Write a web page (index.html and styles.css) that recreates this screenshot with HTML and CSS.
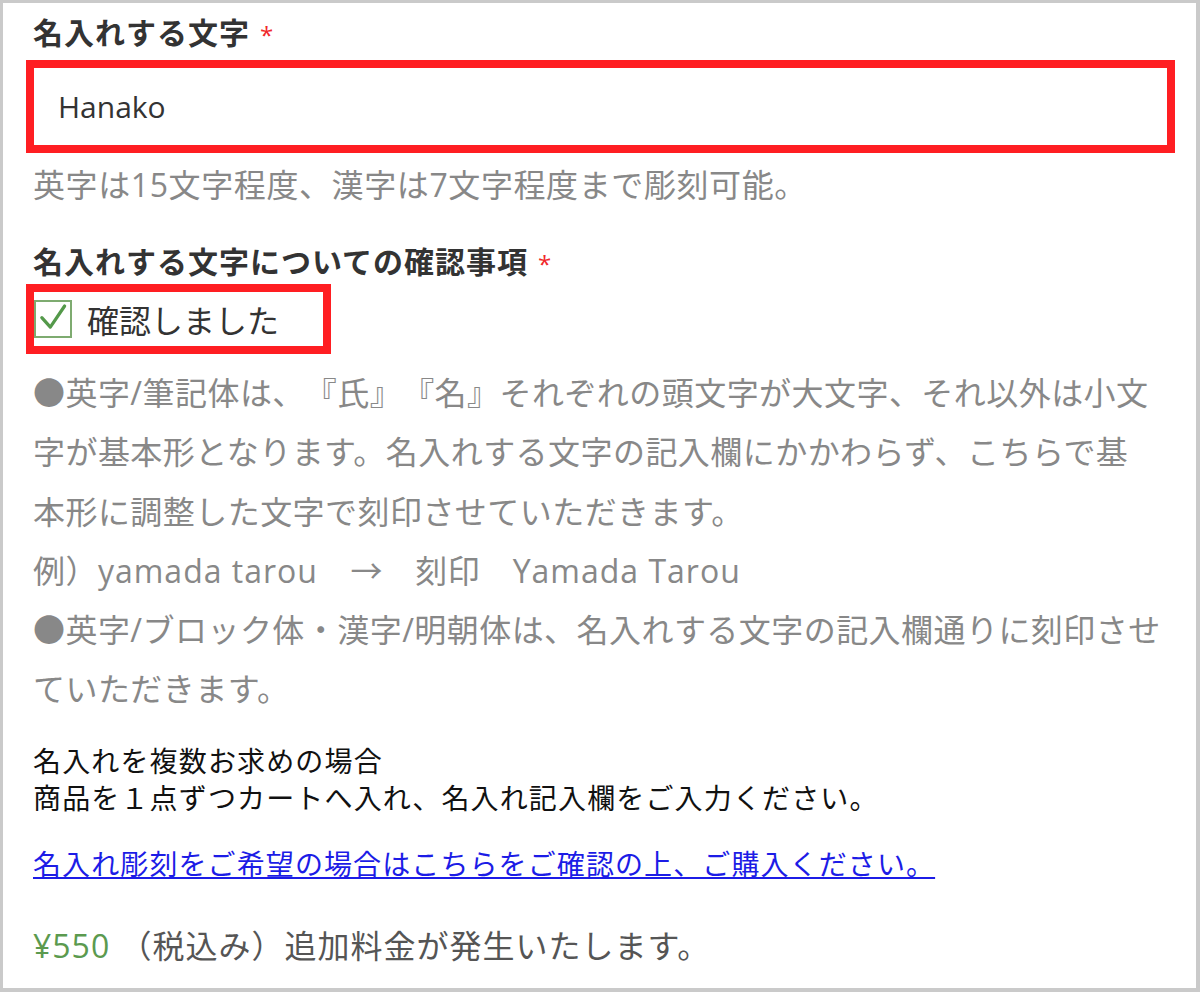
FILE: index.html
```html
<!DOCTYPE html>
<html lang="ja">
<head>
<meta charset="utf-8">
<title>名入れ</title>
<link rel="stylesheet" href="styles.css">
</head>
<body>
<div class="frame">
  <div class="label">名入れする文字<span class="req">*</span></div>
  <div class="highlight input-box">
    <input class="text-input" type="text" value="Hanako">
  </div>
  <p class="hint">英字は15文字程度、漢字は7文字程度まで彫刻可能。</p>

  <div class="label label-2">名入れする文字についての確認事項<span class="req">*</span></div>
  <label class="highlight check-box">
    <span class="checkbox">
      <svg viewBox="0 0 38 38" width="34" height="34" aria-hidden="true"><path d="M6.5 17.5 L16 28 L32 4.5" fill="none" stroke="#54994a" stroke-width="3.6" stroke-linecap="round" stroke-linejoin="round"/></svg>
    </span>
    <span class="check-text">確認しました</span>
  </label>

  <p class="notes">●英字/筆記体は、『氏』『名』それぞれの頭文字が大文字、それ以外は小文<br>字が基本形となります。名入れする文字の記入欄にかかわらず、こちらで基<br>本形に調整した文字で刻印させていただきます。<br>例）<span class="lat">yamada tarou</span>　→　刻印　<span class="lat">Yamada Tarou</span><br>●英字/ブロック体・漢字/明朝体は、名入れする文字の記入欄通りに刻印させ<br>ていただきます。</p>

  <p class="multi">名入れを複数お求めの場合<br>商品を１点ずつカートへ入れ、名入れ記入欄をご入力ください。</p>

  <p class="link-row"><a class="link" href="#">名入れ彫刻をご希望の場合はこちらをご確認の上、ご購入ください。</a></p>

  <p class="price"><span class="yen">¥550</span> （税込み）追加料金が発生いたします。</p>
</div>
</body>
</html>
```
FILE: styles.css
```css
* { box-sizing: border-box; }
html, body { margin: 0; padding: 0; background: #fff; }
body {
  font-family: "Open Sans", "Noto Sans CJK JP", sans-serif;
  text-spacing-trim: space-all;
}
.frame {
  width: 1200px;
  height: 992px;
  border: 3px solid #cacaca;
  border-right-width: 4px;
  border-bottom-width: 4px;
  padding: 8px 10px 0 30px;
  overflow: hidden;
}
p { margin: 0; }
.label {
  font-family: "Noto Sans CJK JP", sans-serif;
  font-size: 30px;
  line-height: 40px;
  height: 40px;
  font-weight: 700;
  letter-spacing: 1px;
  color: #333;
}
.req {
  font-family: "Open Sans", sans-serif;
  color: #f0282a;
  font-size: 24px;
  line-height: 1;
  font-weight: 400;
  margin-left: 10px;
}
.highlight {
  border: 8px solid #ff1e22;
  margin-left: -7px;
}
.input-box {
  margin-top: 9px;
  width: 1149px;
  height: 93px;
}
.text-input {
  display: block;
  width: 100%;
  height: 77px;
  border: 0;
  outline: none;
  padding: 0 0 0 24px;
  font-family: "Open Sans", sans-serif;
  font-size: 30px;
  color: #333;
  background: #fff;
}
.hint {
  margin-top: 12px;
  font-size: 32px;
  line-height: 40px;
  letter-spacing: 0.6px;
  color: #888;
}
.label-2 { margin-top: 35px; }
.check-box {
  margin-top: 4px;
  display: inline-flex;
  align-items: center;
  height: 70px;
  padding-right: 44px;
}
.checkbox {
  width: 38px;
  height: 38px;
  border: 2px solid #7eab70;
  display: flex;
  align-items: center;
  justify-content: center;
  background: #fff;
}
.checkbox svg { display: block; }
.check-text {
  margin-left: 15px;
  font-family: "Noto Sans CJK JP", sans-serif;
  font-size: 32px;
  line-height: 40px;
  color: #333;
}
.notes {
  margin-top: 9px;
  font-size: 32px;
  line-height: 59.3px;
  letter-spacing: 0.45px;
  color: #888;
}
.lat { letter-spacing: 1px; }
.multi {
  margin-top: 23px;
  font-family: "Noto Sans CJK JP", sans-serif;
  font-size: 28px;
  font-weight: 400;
  line-height: 37px;
  letter-spacing: 1.15px;
  color: #111;
}
.link-row {
  margin-top: 27px;
  font-family: "Noto Sans CJK JP", sans-serif;
  font-size: 28px;
  line-height: 40px;
}
.link {
  letter-spacing: 1.1px;
  color: #1c1ce6;
  text-decoration: underline;
}
.price {
  margin-top: 43px;
  font-size: 32px;
  line-height: 40px;
  letter-spacing: 1px;
  color: #555;
}
.yen { color: #5b9a4f; }
```
